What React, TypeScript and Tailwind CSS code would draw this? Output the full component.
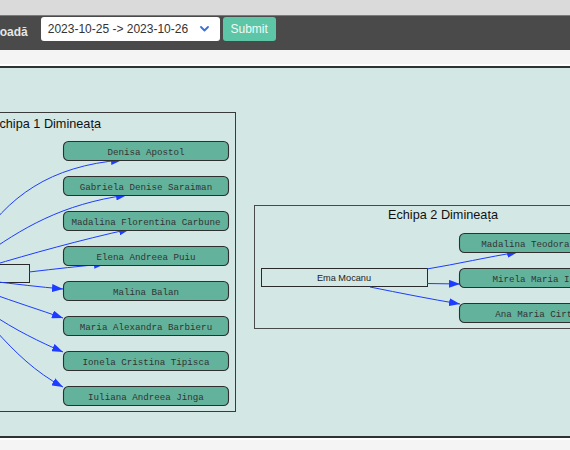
import React from 'react';

type Member = { name: string; top: number };

const team1: Member[] = [
  { name: 'Denisa Apostol', top: 141.5 },
  { name: 'Gabriela Denise Saraiman', top: 176.5 },
  { name: 'Madalina Florentina Carbune', top: 211.5 },
  { name: 'Elena Andreea Puiu', top: 246.5 },
  { name: 'Malina Balan', top: 281.5 },
  { name: 'Maria Alexandra Barbieru', top: 316.5 },
  { name: 'Ionela Cristina Tipisca', top: 351.5 },
  { name: 'Iuliana Andreea Jinga', top: 386.5 },
];

const team2: Member[] = [
  { name: 'Madalina Teodora Matei', top: 233.5 },
  { name: 'Mirela Maria Iancu', top: 268.5 },
  { name: 'Ana Maria Cirtina', top: 303.5 },
];

// edges from the leader node to each member (graphviz-ish splines)
const edges1 = [
  'M -25,247 C 8,196 50,166 122,160',
  'M -20,258 C 22,228 62,204 127,195',
  'M -10,266 C 30,254 80,240 130,229',
  'M 29,272 C 55,269 80,266 105,264',
  'M -10,281 C 15,284 40,287 63,289',
  'M -10,293 C 15,302 40,310 63,318',
  'M -10,313 C 15,330 40,342 63,352',
  'M -5,330 C 15,352 35,372 63,387',
];

const edges2 = [
  'M 427,269 C 457,264 488,257 518,252',
  'M 427,283.5 L 460,284',
  'M 370,287 C 400,293 430,299 460,304',
];

const BLUE = '#1d3cff';

function MemberNode({ x, m }: { x: number; m: Member }) {
  return (
    <g>
      <rect x={x} y={m.top} width={165} height={19} rx={5} fill="#63b29b" stroke="#2f2f2f" strokeWidth={1.1} />
      <text x={x + 82.5} y={m.top + 13} textAnchor="middle" fontSize={9.2} fill="#333" fontFamily="'Liberation Mono', monospace">
        {m.name}
      </text>
    </g>
  );
}

function TeamGraph() {
  return (
    <svg width={570} height={368} viewBox="0 68 570 368" className="block">
      <defs>
        <marker id="arrow" viewBox="0 0 11 8" refX="11" refY="4" markerWidth="11" markerHeight="8" markerUnits="userSpaceOnUse" orient="auto">
          <path d="M0,0 L11,4 L0,8 z" fill={BLUE} />
        </marker>
      </defs>

      {/* Echipa 1 */}
      <rect x={-143.5} y={112.5} width={379} height={299} fill="none" stroke="#3a3a3a" />
      <text x={46} y={128} textAnchor="middle" fontSize={12.7} fill="#111" fontFamily="'Liberation Sans', sans-serif">
        Echipa 1 Dimineața
      </text>
      <rect x={-140.5} y={264.5} width={170} height={18} fill="none" stroke="#2a2a2a" />
      {edges1.map((d, i) => (
        <path key={i} d={d} fill="none" stroke={BLUE} strokeWidth={1} markerEnd="url(#arrow)" />
      ))}
      {team1.map((m) => (
        <MemberNode key={m.name} x={63.5} m={m} />
      ))}

      {/* Echipa 2 */}
      <rect x={254.5} y={205.5} width={378} height={123} fill="none" stroke="#4a4a4a" />
      <text x={443} y={219} textAnchor="middle" fontSize={12.7} fill="#111" fontFamily="'Liberation Sans', sans-serif">
        Echipa 2 Dimineața
      </text>
      <rect x={261.5} y={268.5} width={166} height={18} fill="none" stroke="#2a2a2a" />
      <text x={344} y={281} textAnchor="middle" fontSize={9.2} fill="#222" fontFamily="'Liberation Sans', sans-serif">
        Ema Mocanu
      </text>
      {edges2.map((d, i) => (
        <path key={i} d={d} fill="none" stroke={BLUE} strokeWidth={1} markerEnd="url(#arrow)" />
      ))}
      {team2.map((m) => (
        <MemberNode key={m.name} x={459.5} m={m} />
      ))}
    </svg>
  );
}

export default function App() {
  return (
    <div className="h-[450px] w-[570px] overflow-hidden bg-[#f4f4f4] font-['Liberation_Sans',sans-serif]">
      <div className="h-[16px] border-b border-[#7a7a7a] bg-[#dadada]" />

      {/* filter bar */}
      <div className="flex h-[34px] items-start bg-[#4a4a4a] pt-px">
        <span className="ml-[-23px] mt-[6px] whitespace-nowrap text-[12px] font-bold text-[#e6e6e6]">Perioadă</span>
        <div className="ml-[13px] flex h-[24px] w-[179px] items-center justify-between rounded-[3px] bg-white pl-[7px] pr-[11px] text-[12px] text-[#333]">
          <span>2023-10-25 -&gt; 2023-10-26</span>
          <svg width="9" height="6" viewBox="0 0 9 6" fill="none">
            <path d="M1 1 L4.5 4.5 L8 1" stroke="#3a6fd6" strokeWidth="1.8" strokeLinecap="round" strokeLinejoin="round" />
          </svg>
        </div>
        <button className="ml-[3px] h-[24px] w-[53px] rounded-[3px] bg-[#5cc6a6] text-[12px] text-[#eefaf6]">
          Submit
        </button>
      </div>

      <div className="h-[16px] border-b-2 border-white bg-[#f4f4f4]" />

      <div className="border-y-2 border-[#2d3232] bg-[#d3e7e5]">
        <TeamGraph />
      </div>

      <div className="h-[2px] bg-white" />
    </div>
  );
}
